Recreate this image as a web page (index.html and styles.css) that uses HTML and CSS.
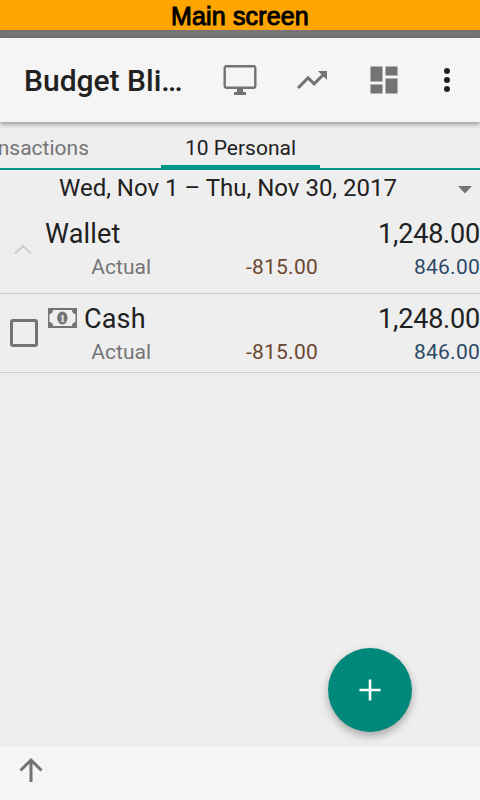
FILE: index.html
```html
<!DOCTYPE html>
<html lang="en">
<head>
<meta charset="utf-8">
<title>Main screen</title>
<link rel="stylesheet" href="styles.css">
</head>
<body>
<div class="caption">Main screen</div>
<div class="statusbar"></div>
<header class="appbar">
  <h1 class="title">Budget Bli…</h1>
  <svg class="action" viewBox="0 0 24 24"><path d="M21 2H3c-1.100 0-2 .9-2 2v12c0 1.100.9 2 2 2h7v2H8v2h8v-2h-2v-2h7c1.100 0 2-.9 2-2V4c0-1.100-.9-2-2-2zm.4 14.400H2.600V3.600h18.800v12.800z"/></svg>
  <svg class="action" viewBox="0 0 24 24"><path d="M16 6l2.290 2.290-4.880 4.880-4-4L2 16.590 3.410 18l6-6 4 4 6.300-6.290L22 12V6z"/></svg>
  <svg class="action" viewBox="0 0 24 24"><path d="M3 13h8V3H3v10zm0 8h8v-6H3v6zm10 0h8V11h-8v10zm0-18v6h8V3h-8z"/></svg>
  <svg class="overflow" viewBox="0 0 10 28"><circle cx="5" cy="5" r="3"/><circle cx="5" cy="14" r="3"/><circle cx="5" cy="23" r="3"/></svg>
</header>
<nav class="tabs">
  <span class="tab previous">Transactions</span>
  <span class="tab current">10 Personal</span>
</nav>
<main class="content">
  <div class="period">
    <span class="dates">Wed, Nov 1 – Thu, Nov 30, 2017</span>
    <svg class="caret" viewBox="0 0 14 8"><path d="M0 0h14L7 7.500z"/></svg>
  </div>
  <section class="account total">
    <div class="lead"><svg class="chevron" viewBox="0 0 18 11"><path d="M1 9.500L9 2l8 7.500"/></svg></div>
    <div class="details">
      <div class="line"><span class="name">Wallet</span><span class="balance">1,248.00</span></div>
      <div class="subline"><span class="label">Actual</span><span class="expense">-815.00</span><span class="income">846.00</span></div>
    </div>
  </section>
  <section class="account item">
    <div class="lead"><span class="checkbox"></span></div>
    <div class="details">
      <div class="line">
        <svg class="note" viewBox="0 0 29 20"><path fill-rule="evenodd" d="M0 0h29v20H0zM5 2a4 4 0 0 1-3.500 4v8A4 4 0 0 1 5 18h19a4 4 0 0 1 3.500-4V6A4 4 0 0 1 24 2z"/><ellipse cx="14.400" cy="10" rx="5.200" ry="6.500"/><text x="14.400" y="14" text-anchor="middle">1</text></svg>
        <span class="name">Cash</span><span class="balance">1,248.00</span>
      </div>
      <div class="subline"><span class="label">Actual</span><span class="expense">-815.00</span><span class="income">846.00</span></div>
    </div>
  </section>
  <button class="fab" aria-label="Add"><svg viewBox="0 0 22 22"><path d="M11 .5v21M.5 11h21"/></svg></button>
</main>
<footer class="bottombar">
  <svg class="up" viewBox="0 0 26 26"><path d="M13 25V3M2.500 13.500L13 3l10.500 10.500"/></svg>
</footer>
</body>
</html>
```
FILE: styles.css
```css
* { box-sizing: border-box; }
body {
  margin: 0;
  height: 800px;
  display: flex;
  flex-direction: column;
  overflow: hidden;
  background: #eee;
  color: #212121;
  font-family: Roboto, sans-serif;
}
svg { display: block; flex: none; fill: #737373; }
.caption {
  height: 30px;
  background: #ffa500;
  color: #000;
  font: 25px/32px "Liberation Sans", sans-serif;
  letter-spacing: .15px;
  text-align: center;
  -webkit-text-stroke: 1px #000;
}
.statusbar { height: 8px; background: #757575; }
.appbar {
  position: relative;
  height: 84px;
  padding-left: 24px;
  display: flex;
  align-items: center;
  background: #f5f5f5;
  box-shadow: 0 2px 5px rgba(0, 0, 0, .4);
}
.title { margin: 0; padding-top: 2px; width: 180px; font-size: 30px; font-weight: 500; line-height: 36px; white-space: nowrap; }
.action { width: 36px; height: 36px; margin: 0 18px; }
.overflow { width: 10px; height: 28px; margin-left: 22px; fill: #212121; }
.tabs {
  height: 48px;
  display: flex;
  justify-content: flex-end;
  padding-right: 160px;
  border-bottom: 2px solid #009688;
  font-size: 21px;
  line-height: 52px;
}
.tab { flex: none; white-space: nowrap; }
.previous { margin-right: 72px; color: #757575; }
.current { width: 159px; height: 46px; text-align: center; border-bottom: 3px solid #009688; }
.content { position: relative; flex: 1; }
.period { height: 36px; display: flex; align-items: center; font-size: 24px; line-height: 36px; }
.dates { width: 458px; padding-right: 2px; text-align: center; }
.caret { width: 14px; height: 8px; margin-top: 3px; }
.account { display: flex; border-bottom: 1px solid #ccc; }
.total { padding: 12px 0 9px; }
.item { padding: 9px 0 3px; }
.lead { width: 45px; display: flex; align-items: center; }
.chevron { width: 18px; height: 11px; margin: -3px 0 0 14px; fill: none; stroke: #ccc; stroke-width: 2; }
.checkbox { width: 28px; height: 28px; margin: -6px 0 0 10px; border: 3px solid #737373; border-radius: 3px; }
.details { flex: 1; }
.line { height: 32px; display: flex; align-items: center; font-size: 27px; line-height: 32px; }
.name { flex: 1; letter-spacing: .15px; }
.balance { letter-spacing: -.2px; }
.note { width: 29px; height: 20px; margin: -2px 7px 0 3px; }
.note text { fill: #eee; font: bold 11px "Liberation Serif", serif; }
.subline { display: flex; font-size: 21px; line-height: 34px; }
.label { width: 106px; text-align: right; color: #757575; }
.expense { width: 167px; text-align: right; letter-spacing: .25px; color: #6d4730; }
.income { flex: 1; text-align: right; letter-spacing: .25px; color: #2c4a68; }
.fab {
  position: absolute;
  right: 68px;
  bottom: 15px;
  width: 84px;
  height: 84px;
  padding: 0;
  border: 0;
  border-radius: 50%;
  display: grid;
  place-items: center;
  background: #00897b;
  box-shadow: 0 4px 8px rgba(0, 0, 0, .3);
}
.fab svg { width: 22px; height: 22px; stroke: #fff; stroke-width: 2.6; }
.bottombar { height: 53px; padding: 10px 18px; background: #f5f5f5; }
.up { width: 26px; height: 26px; fill: none; stroke: #737373; stroke-width: 3; }
```
